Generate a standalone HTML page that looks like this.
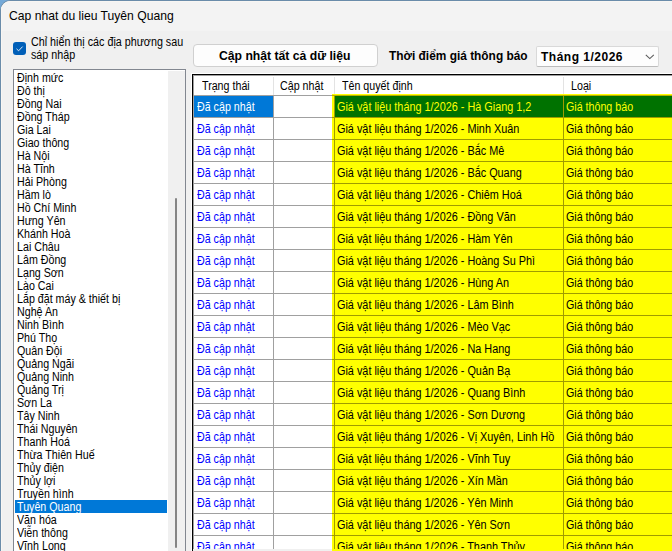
<!DOCTYPE html>
<html><head><meta charset="utf-8">
<style>
*{margin:0;padding:0;box-sizing:border-box}
html,body{width:672px;height:551px;overflow:hidden;background:#74a9d8}
body{position:relative;font-family:"Liberation Sans",sans-serif;font-size:11px;color:#000}
.r{position:absolute}
.t{position:absolute;white-space:nowrap;line-height:13px}
.win{position:absolute;left:0;top:0;width:700px;height:600px;background:#f0f0f0;border-top-left-radius:10px;border-left:1px solid #6a8caa;border-top:1px solid #6a8caa;overflow:hidden}
.hl{position:absolute;left:0;top:0;width:700px;height:600px;border-top-left-radius:9px;border-left:1px solid #f8f6f3;border-top:1px solid #f8f6f3}
.title{position:absolute;left:0;top:0;width:700px;height:30px;background:#f3f3f3}
.ttl{font-size:12.15px;line-height:14px}
.chk{position:absolute;left:13px;top:42px;width:13px;height:13px;background:#005fb8;border-radius:3px}
.chk svg{display:block}
.lbl{font-size:12px;line-height:13px;transform:scaleX(0.895);transform-origin:0 0}
.item{font-size:12px;transform:scaleX(0.89);transform-origin:0 0}
.btn{position:absolute;left:193px;top:44px;width:185px;height:23px;background:#fdfdfd;border:1px solid #d0d0d0;border-radius:4px}
.bold{font-weight:bold;font-size:12px;line-height:14px}
.cb{letter-spacing:0.5px}
.combo{position:absolute;left:536px;top:46px;width:123px;height:21px;background:#fdfdfd;border:1px solid #d9d9d9;border-bottom-color:#bcbcbc;border-radius:2px}
.chev{position:absolute;left:645px;top:54px}
.cell{font-size:12px;transform:scaleX(0.89);transform-origin:0 0}
.c3{transform:scaleX(0.905)}
.bt{font-size:12.2px}
.tl{font-size:11.9px}

</style></head><body>
<div class="win"><div class="title"></div><div class="hl"></div></div>
<div class="t ttl" style="left:9px;top:9px;">Cap nhat du lieu Tuyên Quang</div>
<div class="chk"><svg width="13" height="13" viewBox="0 0 13 13"><path d="M3.5 6.8 L5.6 8.8 L9.6 4.6" fill="none" stroke="#fff" stroke-opacity="0.85" stroke-width="1"/></svg></div>
<div class="t lbl" style="left:31px;top:36px;">Chỉ hiển thị các địa phương sau<br>sáp nhập</div>
<div class="r" style="left:13px;top:69px;width:173px;height:500px;background:#828790;"></div>
<div class="r" style="left:14px;top:70px;width:171px;height:500px;background:#fff;"></div>
<div class="r" style="left:168px;top:71px;width:17px;height:500px;background:#f0f0f0;"></div>
<div class="r" style="left:175px;top:198px;width:2px;height:350px;background:#858585;border-radius:1px"></div>
<div class="t item" style="left:17px;top:72px;">Định mức</div>
<div class="t item" style="left:17px;top:85px;">Đô thị</div>
<div class="t item" style="left:17px;top:98px;">Đồng Nai</div>
<div class="t item" style="left:17px;top:111px;">Đồng Tháp</div>
<div class="t item" style="left:17px;top:124px;">Gia Lai</div>
<div class="t item" style="left:17px;top:137px;">Giao thông</div>
<div class="t item" style="left:17px;top:150px;">Hà Nội</div>
<div class="t item" style="left:17px;top:163px;">Hà Tĩnh</div>
<div class="t item" style="left:17px;top:176px;">Hải Phòng</div>
<div class="t item" style="left:17px;top:189px;">Hầm lò</div>
<div class="t item" style="left:17px;top:202px;">Hồ Chí Minh</div>
<div class="t item" style="left:17px;top:215px;">Hưng Yên</div>
<div class="t item" style="left:17px;top:228px;">Khánh Hoà</div>
<div class="t item" style="left:17px;top:241px;">Lai Châu</div>
<div class="t item" style="left:17px;top:254px;">Lâm Đồng</div>
<div class="t item" style="left:17px;top:267px;">Lạng Sơn</div>
<div class="t item" style="left:17px;top:280px;">Lào Cai</div>
<div class="t item" style="left:17px;top:293px;">Lắp đặt máy &amp; thiết bị</div>
<div class="t item" style="left:17px;top:306px;">Nghệ An</div>
<div class="t item" style="left:17px;top:319px;">Ninh Bình</div>
<div class="t item" style="left:17px;top:332px;">Phú Thọ</div>
<div class="t item" style="left:17px;top:345px;">Quân Đội</div>
<div class="t item" style="left:17px;top:358px;">Quảng Ngãi</div>
<div class="t item" style="left:17px;top:371px;">Quảng Ninh</div>
<div class="t item" style="left:17px;top:384px;">Quảng Trị</div>
<div class="t item" style="left:17px;top:397px;">Sơn La</div>
<div class="t item" style="left:17px;top:410px;">Tây Ninh</div>
<div class="t item" style="left:17px;top:423px;">Thái Nguyên</div>
<div class="t item" style="left:17px;top:436px;">Thanh Hoá</div>
<div class="t item" style="left:17px;top:449px;">Thừa Thiên Huế</div>
<div class="t item" style="left:17px;top:462px;">Thủy điện</div>
<div class="t item" style="left:17px;top:475px;">Thủy lợi</div>
<div class="t item" style="left:17px;top:488px;">Truyền hình</div>
<div class="r" style="left:15px;top:500px;width:152px;height:13px;background:#0078d7;"></div>
<div class="t item" style="left:17px;top:501px;color:#fff">Tuyên Quang</div>
<div class="t item" style="left:17px;top:514px;">Văn hóa</div>
<div class="t item" style="left:17px;top:527px;">Viễn thông</div>
<div class="t item" style="left:17px;top:540px;">Vĩnh Long</div>
<div class="btn"></div>
<div class="t bold bt" style="left:219px;top:49px;">Cập nhật tất cả dữ liệu</div>
<div class="t bold tl" style="left:389px;top:49px;">Thời điểm giá thông báo</div>
<div class="combo"></div>
<div class="t bold cb" style="left:541px;top:50px;">Tháng 1/2026</div>
<svg class="chev" width="10" height="6" viewBox="0 0 10 6"><path d="M0.8 0.8 L4.8 4.6 L8.8 0.8" fill="none" stroke="#5c5c5c" stroke-width="1.1"/></svg>
<div class="r" style="left:191px;top:73px;width:700px;height:1px;background:#ffffff;"></div>
<div class="r" style="left:191px;top:73px;width:1px;height:600px;background:#ffffff;"></div>
<div class="r" style="left:192px;top:74px;width:700px;height:1px;background:#000;"></div>
<div class="r" style="left:192px;top:74px;width:1px;height:600px;background:#000;"></div>
<div class="r" style="left:193px;top:75px;width:700px;height:1px;background:#a0a0a0;"></div>
<div class="r" style="left:193px;top:75px;width:1px;height:600px;background:#a0a0a0;"></div>
<div class="r" style="left:194px;top:76px;width:700px;height:600px;background:#fff;"></div>
<div class="r" style="left:273px;top:77px;width:1px;height:18px;background:#e3e3e3;"></div>
<div class="r" style="left:334px;top:77px;width:1px;height:18px;background:#e3e3e3;"></div>
<div class="r" style="left:563px;top:77px;width:1px;height:18px;background:#e3e3e3;"></div>
<div class="r" style="left:194px;top:95px;width:138px;height:1px;background:#a0a0a0;"></div>
<div class="t cell" style="left:202px;top:80px;">Trạng thái</div>
<div class="t cell" style="left:280px;top:80px;">Cập nhật</div>
<div class="t cell" style="left:342px;top:80px;">Tên quyết định</div>
<div class="t cell" style="left:571px;top:80px;">Loại</div>
<div class="r" style="left:332px;top:94px;width:700px;height:600px;background:#ffff00;"></div>
<div class="r" style="left:332px;top:95px;width:700px;height:1px;background:#b8b000;"></div>
<div class="r" style="left:335px;top:96px;width:228px;height:21px;background:#007200;"></div>
<div class="r" style="left:564px;top:96px;width:700px;height:21px;background:#007200;"></div>
<div class="r" style="left:194px;top:96px;width:79px;height:21px;background:#0078d7;"></div>
<div class="r" style="left:273px;top:95px;width:1px;height:600px;background:#a0a0a0;"></div>
<div class="r" style="left:334px;top:96px;width:1px;height:600px;background:#a09c00;"></div>
<div class="r" style="left:563px;top:96px;width:1px;height:600px;background:#a09c00;"></div>
<div class="r" style="left:194px;top:117px;width:138px;height:1px;background:#a0a0a0;"></div>
<div class="r" style="left:332px;top:117px;width:700px;height:1px;background:#a09c00;"></div>
<div class="r" style="left:194px;top:139px;width:138px;height:1px;background:#a0a0a0;"></div>
<div class="r" style="left:332px;top:139px;width:700px;height:1px;background:#a09c00;"></div>
<div class="r" style="left:194px;top:161px;width:138px;height:1px;background:#a0a0a0;"></div>
<div class="r" style="left:332px;top:161px;width:700px;height:1px;background:#a09c00;"></div>
<div class="r" style="left:194px;top:183px;width:138px;height:1px;background:#a0a0a0;"></div>
<div class="r" style="left:332px;top:183px;width:700px;height:1px;background:#a09c00;"></div>
<div class="r" style="left:194px;top:205px;width:138px;height:1px;background:#a0a0a0;"></div>
<div class="r" style="left:332px;top:205px;width:700px;height:1px;background:#a09c00;"></div>
<div class="r" style="left:194px;top:227px;width:138px;height:1px;background:#a0a0a0;"></div>
<div class="r" style="left:332px;top:227px;width:700px;height:1px;background:#a09c00;"></div>
<div class="r" style="left:194px;top:249px;width:138px;height:1px;background:#a0a0a0;"></div>
<div class="r" style="left:332px;top:249px;width:700px;height:1px;background:#a09c00;"></div>
<div class="r" style="left:194px;top:271px;width:138px;height:1px;background:#a0a0a0;"></div>
<div class="r" style="left:332px;top:271px;width:700px;height:1px;background:#a09c00;"></div>
<div class="r" style="left:194px;top:293px;width:138px;height:1px;background:#a0a0a0;"></div>
<div class="r" style="left:332px;top:293px;width:700px;height:1px;background:#a09c00;"></div>
<div class="r" style="left:194px;top:315px;width:138px;height:1px;background:#a0a0a0;"></div>
<div class="r" style="left:332px;top:315px;width:700px;height:1px;background:#a09c00;"></div>
<div class="r" style="left:194px;top:337px;width:138px;height:1px;background:#a0a0a0;"></div>
<div class="r" style="left:332px;top:337px;width:700px;height:1px;background:#a09c00;"></div>
<div class="r" style="left:194px;top:359px;width:138px;height:1px;background:#a0a0a0;"></div>
<div class="r" style="left:332px;top:359px;width:700px;height:1px;background:#a09c00;"></div>
<div class="r" style="left:194px;top:381px;width:138px;height:1px;background:#a0a0a0;"></div>
<div class="r" style="left:332px;top:381px;width:700px;height:1px;background:#a09c00;"></div>
<div class="r" style="left:194px;top:403px;width:138px;height:1px;background:#a0a0a0;"></div>
<div class="r" style="left:332px;top:403px;width:700px;height:1px;background:#a09c00;"></div>
<div class="r" style="left:194px;top:425px;width:138px;height:1px;background:#a0a0a0;"></div>
<div class="r" style="left:332px;top:425px;width:700px;height:1px;background:#a09c00;"></div>
<div class="r" style="left:194px;top:447px;width:138px;height:1px;background:#a0a0a0;"></div>
<div class="r" style="left:332px;top:447px;width:700px;height:1px;background:#a09c00;"></div>
<div class="r" style="left:194px;top:469px;width:138px;height:1px;background:#a0a0a0;"></div>
<div class="r" style="left:332px;top:469px;width:700px;height:1px;background:#a09c00;"></div>
<div class="r" style="left:194px;top:491px;width:138px;height:1px;background:#a0a0a0;"></div>
<div class="r" style="left:332px;top:491px;width:700px;height:1px;background:#a09c00;"></div>
<div class="r" style="left:194px;top:513px;width:138px;height:1px;background:#a0a0a0;"></div>
<div class="r" style="left:332px;top:513px;width:700px;height:1px;background:#a09c00;"></div>
<div class="r" style="left:194px;top:535px;width:138px;height:1px;background:#a0a0a0;"></div>
<div class="r" style="left:332px;top:535px;width:700px;height:1px;background:#a09c00;"></div>
<div class="r" style="left:194px;top:557px;width:138px;height:1px;background:#a0a0a0;"></div>
<div class="r" style="left:332px;top:557px;width:700px;height:1px;background:#a09c00;"></div>
<div class="r" style="left:194px;top:579px;width:138px;height:1px;background:#a0a0a0;"></div>
<div class="r" style="left:332px;top:579px;width:700px;height:1px;background:#a09c00;"></div>
<div class="t cell" style="left:197px;top:101px;color:#fff">Đã cập nhật</div>
<div class="t cell c3" style="left:337px;top:101px;color:#ff0">Giá vật liệu tháng 1/2026 - Hà Giang 1,2</div>
<div class="t cell" style="left:566px;top:101px;color:#ff0">Giá thông báo</div>
<div class="t cell" style="left:197px;top:123px;color:#0000ff">Đã cập nhật</div>
<div class="t cell c3" style="left:337px;top:123px;">Giá vật liệu tháng 1/2026 - Minh Xuân</div>
<div class="t cell" style="left:566px;top:123px;">Giá thông báo</div>
<div class="t cell" style="left:197px;top:145px;color:#0000ff">Đã cập nhật</div>
<div class="t cell c3" style="left:337px;top:145px;">Giá vật liệu tháng 1/2026 - Bắc Mê</div>
<div class="t cell" style="left:566px;top:145px;">Giá thông báo</div>
<div class="t cell" style="left:197px;top:167px;color:#0000ff">Đã cập nhật</div>
<div class="t cell c3" style="left:337px;top:167px;">Giá vật liệu tháng 1/2026 - Bắc Quang</div>
<div class="t cell" style="left:566px;top:167px;">Giá thông báo</div>
<div class="t cell" style="left:197px;top:189px;color:#0000ff">Đã cập nhật</div>
<div class="t cell c3" style="left:337px;top:189px;">Giá vật liệu tháng 1/2026 - Chiêm Hoá</div>
<div class="t cell" style="left:566px;top:189px;">Giá thông báo</div>
<div class="t cell" style="left:197px;top:211px;color:#0000ff">Đã cập nhật</div>
<div class="t cell c3" style="left:337px;top:211px;">Giá vật liệu tháng 1/2026 - Đồng Văn</div>
<div class="t cell" style="left:566px;top:211px;">Giá thông báo</div>
<div class="t cell" style="left:197px;top:233px;color:#0000ff">Đã cập nhật</div>
<div class="t cell c3" style="left:337px;top:233px;">Giá vật liệu tháng 1/2026 - Hàm Yên</div>
<div class="t cell" style="left:566px;top:233px;">Giá thông báo</div>
<div class="t cell" style="left:197px;top:255px;color:#0000ff">Đã cập nhật</div>
<div class="t cell c3" style="left:337px;top:255px;">Giá vật liệu tháng 1/2026 - Hoàng Su Phì</div>
<div class="t cell" style="left:566px;top:255px;">Giá thông báo</div>
<div class="t cell" style="left:197px;top:277px;color:#0000ff">Đã cập nhật</div>
<div class="t cell c3" style="left:337px;top:277px;">Giá vật liệu tháng 1/2026 - Hùng An</div>
<div class="t cell" style="left:566px;top:277px;">Giá thông báo</div>
<div class="t cell" style="left:197px;top:299px;color:#0000ff">Đã cập nhật</div>
<div class="t cell c3" style="left:337px;top:299px;">Giá vật liệu tháng 1/2026 - Lâm Bình</div>
<div class="t cell" style="left:566px;top:299px;">Giá thông báo</div>
<div class="t cell" style="left:197px;top:321px;color:#0000ff">Đã cập nhật</div>
<div class="t cell c3" style="left:337px;top:321px;">Giá vật liệu tháng 1/2026 - Mèo Vạc</div>
<div class="t cell" style="left:566px;top:321px;">Giá thông báo</div>
<div class="t cell" style="left:197px;top:343px;color:#0000ff">Đã cập nhật</div>
<div class="t cell c3" style="left:337px;top:343px;">Giá vật liệu tháng 1/2026 - Na Hang</div>
<div class="t cell" style="left:566px;top:343px;">Giá thông báo</div>
<div class="t cell" style="left:197px;top:365px;color:#0000ff">Đã cập nhật</div>
<div class="t cell c3" style="left:337px;top:365px;">Giá vật liệu tháng 1/2026 - Quản Bạ</div>
<div class="t cell" style="left:566px;top:365px;">Giá thông báo</div>
<div class="t cell" style="left:197px;top:387px;color:#0000ff">Đã cập nhật</div>
<div class="t cell c3" style="left:337px;top:387px;">Giá vật liệu tháng 1/2026 - Quang Bình</div>
<div class="t cell" style="left:566px;top:387px;">Giá thông báo</div>
<div class="t cell" style="left:197px;top:409px;color:#0000ff">Đã cập nhật</div>
<div class="t cell c3" style="left:337px;top:409px;">Giá vật liệu tháng 1/2026 - Sơn Dương</div>
<div class="t cell" style="left:566px;top:409px;">Giá thông báo</div>
<div class="t cell" style="left:197px;top:431px;color:#0000ff">Đã cập nhật</div>
<div class="t cell c3" style="left:337px;top:431px;">Giá vật liệu tháng 1/2026 - Vị Xuyên, Linh Hồ</div>
<div class="t cell" style="left:566px;top:431px;">Giá thông báo</div>
<div class="t cell" style="left:197px;top:453px;color:#0000ff">Đã cập nhật</div>
<div class="t cell c3" style="left:337px;top:453px;">Giá vật liệu tháng 1/2026 - Vĩnh Tuy</div>
<div class="t cell" style="left:566px;top:453px;">Giá thông báo</div>
<div class="t cell" style="left:197px;top:475px;color:#0000ff">Đã cập nhật</div>
<div class="t cell c3" style="left:337px;top:475px;">Giá vật liệu tháng 1/2026 - Xín Mần</div>
<div class="t cell" style="left:566px;top:475px;">Giá thông báo</div>
<div class="t cell" style="left:197px;top:497px;color:#0000ff">Đã cập nhật</div>
<div class="t cell c3" style="left:337px;top:497px;">Giá vật liệu tháng 1/2026 - Yên Minh</div>
<div class="t cell" style="left:566px;top:497px;">Giá thông báo</div>
<div class="t cell" style="left:197px;top:519px;color:#0000ff">Đã cập nhật</div>
<div class="t cell c3" style="left:337px;top:519px;">Giá vật liệu tháng 1/2026 - Yên Sơn</div>
<div class="t cell" style="left:566px;top:519px;">Giá thông báo</div>
<div class="t cell" style="left:197px;top:541px;color:#0000ff">Đã cập nhật</div>
<div class="t cell c3" style="left:337px;top:541px;">Giá vật liệu tháng 1/2026 - Thanh Thủy</div>
<div class="t cell" style="left:566px;top:541px;">Giá thông báo</div>
<div class="r" style="left:193px;top:549px;width:139px;height:2px;background:#f0f0f0;"></div>
<div class="r" style="left:332px;top:549px;width:700px;height:2px;background:#ffff00;"></div>
</body></html>
